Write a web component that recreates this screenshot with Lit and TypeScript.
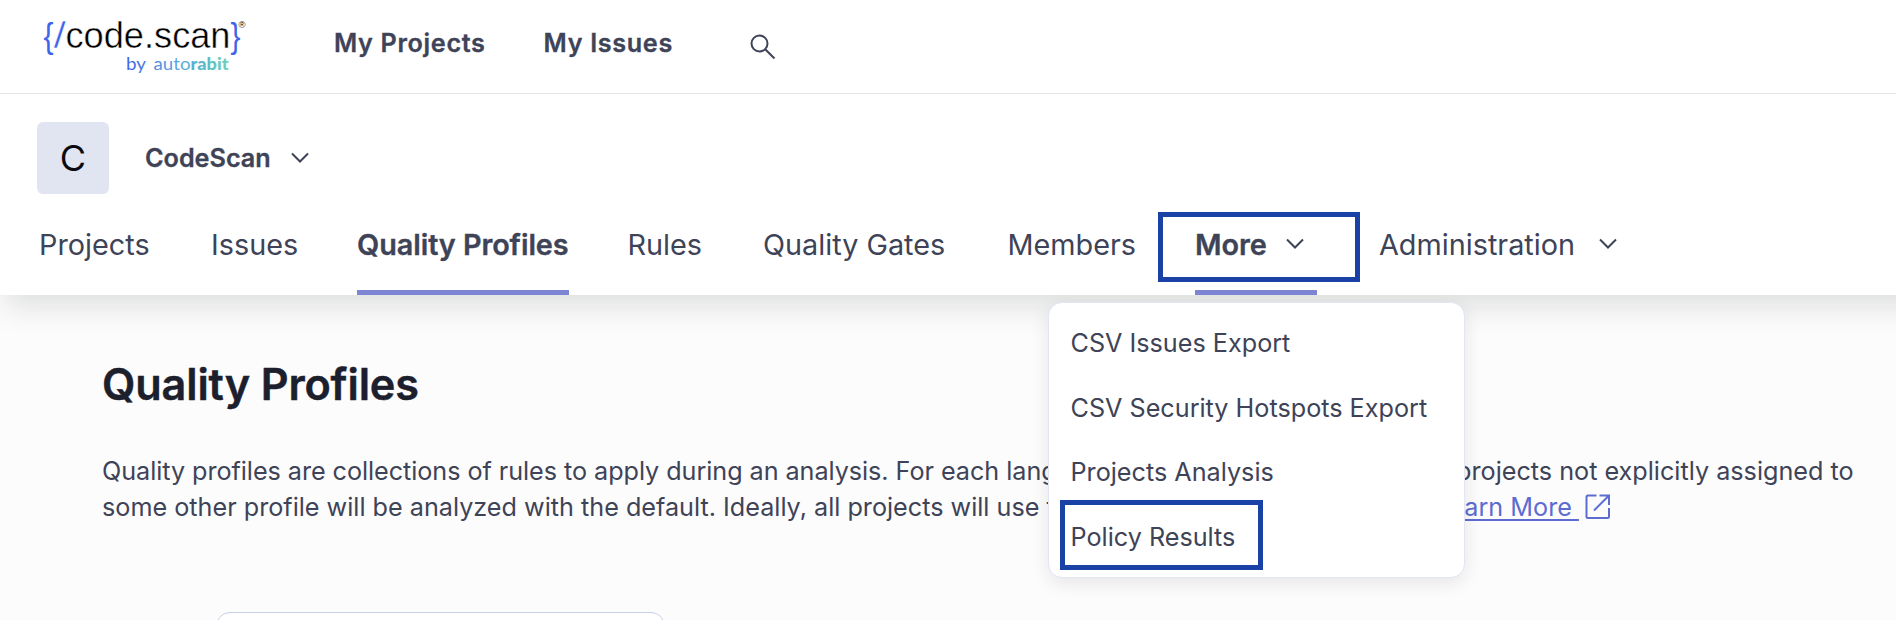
import { LitElement, html, css } from "lit";
import { customElement, property } from "lit/decorators.js";
import { classMap } from "lit/directives/class-map.js";

@customElement("code-logo")
class CodeLogo extends LitElement {
  static styles = css`
    :host { display: block; width: 210px; height: 62px; }
    svg { display: block; }
    .mark { font-family: "Liberation Sans", Arial, sans-serif; }
    .by { font-family: Lato, sans-serif; font-weight: 400; }
    .bold { font-weight: 900; }
  `;
  render() {
    return html`<svg width="210" height="62" viewBox="40 15 210 62">
      <defs>
        <linearGradient id="g" gradientUnits="userSpaceOnUse" x1="127" y1="0" x2="228" y2="0">
          <stop offset="0" stop-color="#3f66e6" />
          <stop offset="0.5" stop-color="#5fa6e0" />
          <stop offset="0.7" stop-color="#55b4cc" />
          <stop offset="1" stop-color="#6fd0bc" />
        </linearGradient>
      </defs>
      <g class="mark" fill="#3f63ea">
        <text x="43.500" y="47.500" font-size="35" textLength="10" lengthAdjust="spacingAndGlyphs">{</text>
        <text x="53.500" y="48" font-size="36" textLength="12.500" lengthAdjust="spacingAndGlyphs" stroke="#fff" stroke-width=".6">/</text>
        <text x="230.500" y="47.500" font-size="35" textLength="10" lengthAdjust="spacingAndGlyphs">}</text>
      </g>
      <text class="mark" x="65.500" y="48.300" font-size="36" textLength="165" lengthAdjust="spacingAndGlyphs" fill="#000" stroke="#fff" stroke-width=".45">code.scan</text>
      <text class="mark" x="238.500" y="28" font-size="9.500" fill="#111">®</text>
      <g class="by" fill="url(#g)" font-size="17.500">
        <text x="126" y="69.500" textLength="20" lengthAdjust="spacingAndGlyphs">by</text>
        <text x="153.500" y="69.500" textLength="37" lengthAdjust="spacingAndGlyphs">auto</text>
        <text class="bold" x="190.500" y="69.500" textLength="38" lengthAdjust="spacingAndGlyphs">rabit</text>
      </g>
    </svg>`;
  }
}

const chevron = html`<svg class="chev" width="18" height="12" viewBox="0 0 18 12" fill="none" stroke="currentColor" stroke-width="2">
  <path d="M1 1.500 9 9.500 17 1.500" />
</svg>`;

@customElement("nav-tab")
class NavTab extends LitElement {
  @property() label = "";
  @property({ type: Boolean }) active = false;
  @property({ type: Boolean }) menu = false;
  static styles = css`
    :host { display: block; height: 100%; }
    .tab {
      display: flex; box-sizing: border-box; height: 100%;
      font-size: 28.8px; line-height: 36px; color: #3e4357; white-space: nowrap;
      border-bottom: 5px solid transparent;
    }
    .active { font-weight: 600; letter-spacing: -0.07px; -webkit-text-stroke: 0.35px currentColor; border-color: #7d86d5; }
    .chev { margin: 11px 0 0 24px; padding-right: 13px; }
    .active .chev { margin-left: 19.500px; }
  `;
  render() {
    return html`<div class=${classMap({ tab: true, active: this.active })}>
      <span>${this.label}</span>${this.menu ? chevron : ""}
    </div>`;
  }
}

@customElement("app-root")
class AppRoot extends LitElement {
  static styles = css`
    :host {
      display: block; position: relative; height: 620px; overflow: hidden;
      background: #fcfcfc; color: #3e4357;
      font-family: Inter, sans-serif; font-size: 25.2px; line-height: 36px;
    }
    .top {
      display: flex; position: relative; z-index: 1; box-sizing: border-box; height: 94px;
      padding: 15px 0 0 40px; background: #fff; border-bottom: 1px solid #e6e6e8;
    }
    .global {
      display: flex; gap: 58px; margin-left: 84px; padding-top: 10px; font-weight: 600;
      letter-spacing: 0.660px; white-space: nowrap; -webkit-text-stroke: 0.3px currentColor;
    }
    .search { margin: 18px 0 0 77px; }
    .head {
      display: flex; flex-direction: column; box-sizing: border-box; height: 201px;
      margin-right: -80px; padding: 28px 0 0 37px; background: #fff;
      box-shadow: 5px 12px 28px rgba(20, 28, 35, 0.13);
    }
    .org { display: flex; align-items: center; font-weight: 600; }
    .name { -webkit-text-stroke: 0.3px currentColor; }
    .avatar {
      width: 72px; height: 72px; border-radius: 6px; background: #e1e5f2; color: #0a0b10;
      font-size: 36px; font-weight: 400; line-height: 72px; text-align: center; margin-right: 36px;
    }
    .org .chev { margin-left: 20px; }
    .tabs {
      display: grid; grid-template-columns: 172px 146px 270.500px 135.500px 244.500px 187.500px 184px auto;
      justify-content: start; justify-items: start; flex: 1; padding: 33px 0 0 2px;
    }
    .page { padding: 64px 0 0 102px; }
    h1 {
      margin: 0; font-size: 43.2px; line-height: 50px; font-weight: 600; color: #1c202d;
      letter-spacing: -0.13px; -webkit-text-stroke: 0.45px currentColor;
    }
    p { margin: 44px 0 0; white-space: nowrap; }
    .lead { letter-spacing: -0.05px; }
    a { margin-left: 4px; color: #5d6cd0; text-decoration: underline; text-decoration-thickness: 2px; text-underline-offset: 3px; }
    .ext { margin-left: 6px; vertical-align: -4px; }
    .card { width: 447px; height: 60px; margin: 87px 0 0 113.500px; border: 1px solid #c9cfe6; border-radius: 14px; background: #fff; }
    .menu {
      position: absolute; left: 1048px; top: 302px; width: 417px; height: 276px; box-sizing: border-box;
      padding: 8px 0 0 21.500px; border: 1px solid #e1e5f4; border-radius: 14px; background: #fff;
      box-shadow: 0 5px 18px rgba(25, 30, 45, 0.1);
    }
    .item { height: 64.6px; box-sizing: border-box; padding-top: 14px; white-space: nowrap; }
    .mark { position: absolute; box-sizing: border-box; border: 5px solid #1a41a5; }
    .mark-more { left: 1157.500px; top: 212px; width: 202px; height: 70px; }
    .mark-policy { left: 1060px; top: 500px; width: 203px; height: 70px; }
  `;
  render() {
    return html`
      <header class="top">
        <code-logo></code-logo>
        <nav class="global"><span>My Projects</span><span>My Issues</span></nav>
        <svg class="search" width="26" height="27" viewBox="0 0 26 27" fill="none" stroke="#3e4357" stroke-width="2">
          <circle cx="9.500" cy="10.500" r="8" /><path d="M15.200 16.300 24.500 25.500" />
        </svg>
      </header>
      <section class="head">
        <div class="org"><div class="avatar">C</div><span class="name">CodeScan</span>${chevron}</div>
        <nav class="tabs">
          <nav-tab label="Projects"></nav-tab>
          <nav-tab label="Issues"></nav-tab>
          <nav-tab label="Quality Profiles" active></nav-tab>
          <nav-tab label="Rules"></nav-tab>
          <nav-tab label="Quality Gates"></nav-tab>
          <nav-tab label="Members"></nav-tab>
          <nav-tab label="More" active menu></nav-tab>
          <nav-tab label="Administration" menu></nav-tab>
        </nav>
      </section>
      <main class="page">
        <h1>Quality Profiles</h1>
        <p><span class="lead">Quality profiles are collections of rules to apply during an analysis. For each</span> language there is a default profile. All projects not explicitly assigned to<br />some other profile will be analyzed with the default. Ideally, all projects will use the same profile for a language. <a href="#">Learn More&nbsp;</a><svg class="ext" width="26" height="26" viewBox="0 0 26 26" fill="none" stroke="#5d6cd0" stroke-width="2">
          <path d="M11.500 1.500H3Q1.500 1.500 1.500 3V22.500Q1.500 24 3 24H22.500Q24 24 24 22.500V14" /><path d="M14.500 1.500H24V11M24 1.500 9 16.500" />
        </svg></p>
        <div class="card"></div>
      </main>
      <div class="menu">
        <div class="item">CSV Issues Export</div>
        <div class="item">CSV Security Hotspots Export</div>
        <div class="item">Projects Analysis</div>
        <div class="item">Policy Results</div>
      </div>
      <div class="mark mark-more"></div>
      <div class="mark mark-policy"></div>
    `;
  }
}
